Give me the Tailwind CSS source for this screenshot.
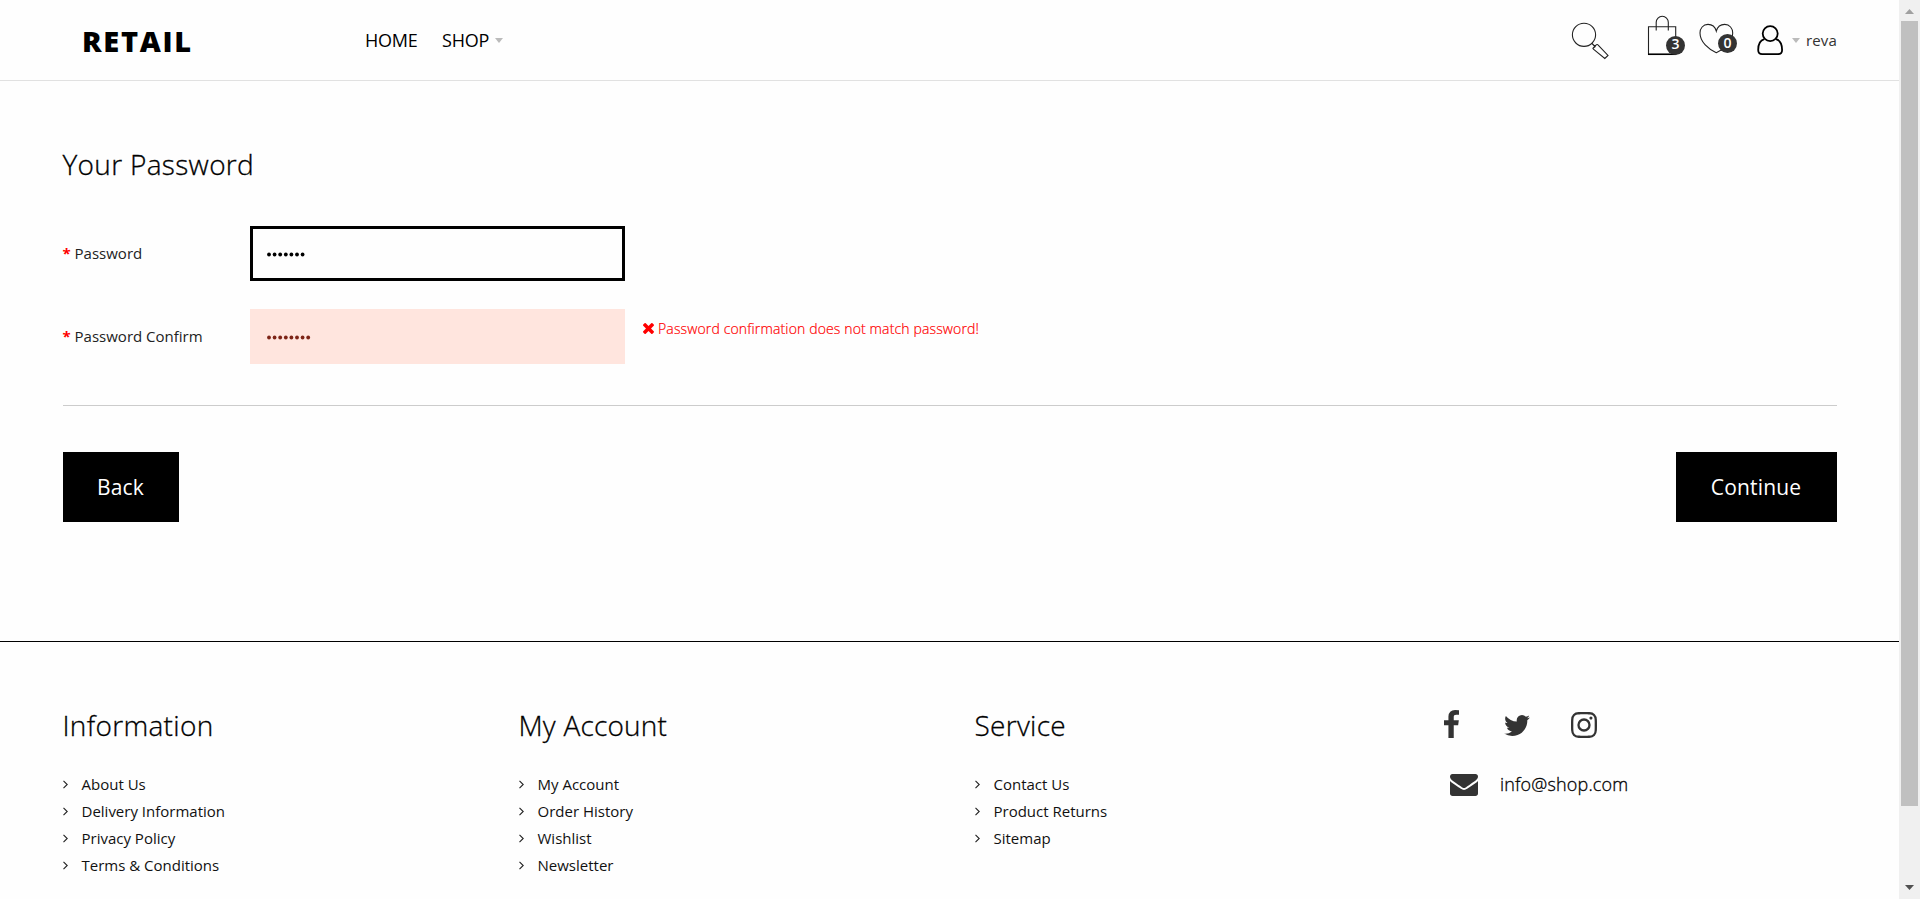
<!DOCTYPE html>
<html lang="en">
<head>
<meta charset="utf-8">
<title>Retail</title>
<script src="https://cdn.jsdelivr.net/npm/@tailwindcss/browser@4"></script>
</head>
<body class="flex h-[899px] w-[1920px] overflow-hidden bg-[#fefefe] font-['Open_Sans',sans-serif] text-black">
<svg class="hidden">
  <symbol id="chev" viewBox="0 0 5 9"><path d="M.5 .8 4.2 4.5 .5 8.2" fill="none" stroke="#222" stroke-width="1.1"/></symbol>
</svg>
<div class="w-[1899px] shrink-0">
  <header class="flex h-[81px] items-center border-b border-[#e1e1e1] pr-[62px] pl-[82px]">
    <div class="w-[283px] pt-px text-[29px] leading-none font-extrabold tracking-[1.700px]">RETAIL</div>
    <nav class="flex items-center text-[18px] font-medium tracking-[-0.200px]">
      <a class="w-[77px]">HOME</a><a>SHOP</a>
      <svg class="ml-[6px] h-[5px] w-[8px]" viewBox="0 0 8 5"><path d="M0 0h8L4 5z" fill="#bbb"/></svg>
    </nav>
    <div class="ml-auto flex h-20 items-start">
      <svg class="mt-[22px] mr-[38px] h-[38px] w-[38px]" viewBox="0 0 38 38" fill="none" stroke="#222" stroke-width="1.1"><circle cx="13" cy="12.800" r="11.600"/><path d="M21 21.500l3.500 3.500M22.300 26l3.200-3.300a.8.8 0 0 1 1.200 0L37 33.400 33.800 36.500 22.400 27.200a.8.8 0 0 1 0-1.200z"/></svg>
      <div class="relative mt-[15px] mr-[14px] h-[40px] w-[38px]">
        <svg class="h-[41px] w-[30px]" viewBox="0 0 30 41" fill="none" stroke="#222" stroke-width="1.100"><path d="M1.500 11.700h27.200v27.600H1.500z"/><path d="M9.200 15.500V7.300a6 6 0 0 1 12.100 0v8.200"/><path d="M1 39.300h28.200" stroke="#000" stroke-width="1.500"/></svg>
        <span class="absolute top-[20.500px] left-[19px] flex h-[19px] w-[19px] items-center justify-center rounded-full bg-[#333] pb-[2px] text-[14px] leading-none font-semibold text-white">3</span>
      </div>
      <div class="relative mt-[23px] mr-[20px] h-[32px] w-[38px]">
        <svg class="h-[31px] w-[35px]" viewBox="0 0 35 31" fill="none" stroke="#222" stroke-width="1.100"><path d="M17.300 8.200C16 3.500 12.500 1.400 9 1.400 4 1.400 1 5.500 1 10c0 9 8.500 16.200 16.300 19.700C25 26.200 33.700 19 33.700 10c0-4.500-3-8.600-8-8.600-3.600 0-7.100 2.100-8.400 6.800z"/></svg>
        <span class="absolute top-[11px] left-[19px] flex h-[19px] w-[19px] items-center justify-center rounded-full bg-[#333] pb-[2px] text-[14px] leading-none font-semibold text-white">0</span>
      </div>
      <svg class="mt-[25px] mr-[8px] h-[31px] w-[27px]" viewBox="0 0 27 31" fill="none" stroke="#000" stroke-width="1.800"><circle cx="13.200" cy="8.600" r="7.500"/><path d="M7.300 14.200C2.500 15.500 1.200 20 1.200 25c0 2.700 1.600 4.200 4 4.200h15.900c2.400 0 4-1.500 4-4.200 0-5-1.300-9.500-6.100-10.800"/></svg>
      <svg class="mt-[38px] mr-[6px] h-[5px] w-[8px]" viewBox="0 0 8 5"><path d="M0 0h8L4 5z" fill="#bbb"/></svg>
      <span class="mt-[30px] text-[15px] leading-[21px] tracking-[0.150px] text-[#333]">reva</span>
    </div>
  </header>
  <main class="h-[560px] px-[62.5px] pt-[63px]">
    <h1 class="text-[28px] leading-[40px] font-light tracking-[0.320px] [-webkit-text-stroke:0.3px_black]">Your Password</h1>
    <div class="mt-[42px] flex h-[55px] items-center">
      <label class="w-[187.500px] text-[15px] text-[#222]"><b class="font-bold text-[#f00]">*</b> Password</label>
      <div class="flex h-[55px] w-[375px] items-center border-3 border-black pt-px pl-[14px] text-[15px]"><svg class="h-[5px] w-[42px]" viewBox="0 0 42 5"><g><circle cx="2" cy="2.500" r="1.900"/><circle cx="7.600" cy="2.500" r="1.900"/><circle cx="13.200" cy="2.500" r="1.900"/><circle cx="18.800" cy="2.500" r="1.900"/><circle cx="24.400" cy="2.500" r="1.900"/><circle cx="30" cy="2.500" r="1.900"/><circle cx="35.600" cy="2.500" r="1.900"/></g></svg></div>
    </div>
    <div class="mt-[28px] flex h-[55px] items-center">
      <label class="w-[187.500px] text-[15px] text-[#222]"><b class="font-bold text-[#f00]">*</b> Password Confirm</label>
      <div class="flex h-[55px] w-[375px] items-center bg-[#ffe5de] pt-px pl-[17px]"><svg class="h-[5px] w-[46px]" viewBox="0 0 46 5" fill="#7d2416"><circle cx="2" cy="2.500" r="1.900"/><circle cx="7.600" cy="2.500" r="1.900"/><circle cx="13.200" cy="2.500" r="1.900"/><circle cx="18.800" cy="2.500" r="1.900"/><circle cx="24.400" cy="2.500" r="1.900"/><circle cx="30" cy="2.500" r="1.900"/><circle cx="35.600" cy="2.500" r="1.900"/><circle cx="41.200" cy="2.500" r="1.900"/></svg></div>
      <div class="mb-[16px] ml-[18px] flex items-center text-[14px] font-light tracking-[0.140px] text-[#f00] [-webkit-text-stroke:0.2px_#f00]">
        <svg class="mr-[4px] h-[11px] w-[11px]" viewBox="302 430 1188 1188" fill="#f00"><path transform="translate(0,64)" d="M1490 1322q0 40-28 68l-136 136q-28 28-68 28t-68-28l-294-294-294 294q-28 28-68 28t-68-28l-136-136q-28-28-28-68t28-68l294-294-294-294q-28-28-28-68t28-68l136-136q28-28 68-28t68 28l294 294 294-294q28-28 68-28t68 28l136 136q28 28 28 68t-28 68l-294 294 294 294q28 28 28 68z"/></svg>
        Password confirmation does not match password!
      </div>
    </div>
    <hr class="mt-[41px] border-[#ccc]">
    <div class="mt-[46px] flex justify-between text-[21px] text-white">
      <div class="flex h-[70px] w-[116px] items-center justify-center bg-black pt-[2px] tracking-[0.150px]">Back</div>
      <div class="flex h-[70px] w-[161px] items-center justify-center bg-black pt-[2px] tracking-[0.150px]">Continue</div>
    </div>
  </main>
  <footer class="flex h-[258px] border-t border-black pt-[63px] pl-[62.5px] text-[15px] text-[#111]">
    <section class="w-[456px]">
      <h2 class="mb-[26px] text-[28px] leading-[40px] font-light tracking-[0.320px] text-black [-webkit-text-stroke:0.3px_black]">Information</h2>
      <ul class="leading-[27px]">
        <li class="flex items-center gap-[14px]"><svg class="h-[9px] w-[5px]"><use href="#chev"/></svg>About Us</li>
        <li class="flex items-center gap-[14px]"><svg class="h-[9px] w-[5px]"><use href="#chev"/></svg>Delivery Information</li>
        <li class="flex items-center gap-[14px]"><svg class="h-[9px] w-[5px]"><use href="#chev"/></svg>Privacy Policy</li>
        <li class="flex items-center gap-[14px]"><svg class="h-[9px] w-[5px]"><use href="#chev"/></svg>Terms &amp; Conditions</li>
      </ul>
    </section>
    <section class="w-[456px]">
      <h2 class="mb-[26px] text-[28px] leading-[40px] font-light tracking-[0.200px] text-black [-webkit-text-stroke:0.3px_black]">My Account</h2>
      <ul class="leading-[27px]">
        <li class="flex items-center gap-[14px]"><svg class="h-[9px] w-[5px]"><use href="#chev"/></svg>My Account</li>
        <li class="flex items-center gap-[14px]"><svg class="h-[9px] w-[5px]"><use href="#chev"/></svg>Order History</li>
        <li class="flex items-center gap-[14px]"><svg class="h-[9px] w-[5px]"><use href="#chev"/></svg>Wishlist</li>
        <li class="flex items-center gap-[14px]"><svg class="h-[9px] w-[5px]"><use href="#chev"/></svg>Newsletter</li>
      </ul>
    </section>
    <section class="w-[469.500px]">
      <h2 class="mb-[26px] text-[28px] leading-[40px] font-light tracking-[0.300px] text-black [-webkit-text-stroke:0.3px_black]">Service</h2>
      <ul class="leading-[27px]">
        <li class="flex items-center gap-[14px]"><svg class="h-[9px] w-[5px]"><use href="#chev"/></svg>Contact Us</li>
        <li class="flex items-center gap-[14px]"><svg class="h-[9px] w-[5px]"><use href="#chev"/></svg>Product Returns</li>
        <li class="flex items-center gap-[14px]"><svg class="h-[9px] w-[5px]"><use href="#chev"/></svg>Sitemap</li>
      </ul>
    </section>
    <section class="pt-[5px]">
      <div class="flex h-[28px] items-end">
        <svg class="mr-[45px] h-[28px] w-[15px]" viewBox="479 0 864 1664" preserveAspectRatio="none" fill="#333"><path d="M1343 12v264h-157q-86 0-116 36t-30 108v189h293l-39 296h-254v759h-306v-759h-255v-296h255v-218q0-186 104-288.500t277-102.500q147 0 228 12z"/></svg>
        <svg class="mr-[41px] mb-[2px] h-[21px] w-[26px]" viewBox="108 256 1576 1280" fill="#333"><path d="M1684 408q-67 98-162 167 1 14 1 42 0 130-38 259.500t-115.500 248.500-184.500 210.500-258 146-323 54.500q-271 0-496-145 35 4 78 4 225 0 401-138-105-2-188-64.500t-114-159.500q33 5 61 5 43 0 85-11-112-23-185.500-111.500t-73.500-205.500v-4q68 38 146 41-66-44-105-115t-39-154q0-88 44-163 121 149 294.500 238.500t371.500 99.500q-8-38-8-74 0-134 94.500-228.500t228.500-94.500q140 0 236 102 109-21 205-78-37 115-142 178 93-10 186-50z"/></svg>
        <svg class="h-[26px] w-[26px]" viewBox="128 128 1536 1536" fill="#333"><path d="M1152 896q0-106-75-181t-181-75-181 75-75 181 75 181 181 75 181-75 75-181zm138 0q0 164-115 279t-279 115-279-115-115-279 115-279 279-115 279 115 115 279zm108-410q0 38-27 65t-65 27-65-27-27-65 27-65 65-27 65 27 27 65zm-502-220q-7 0-76.500-.5t-105.500 0-96.500 3-103 10-71.500 18.500q-50 20-88 58t-58 88q-11 29-18.500 71.500t-10 103-3 96.500 0 105.500.5 76.500-.5 76.500 0 105.500 3 96.500 10 103 18.500 71.500q20 50 58 88t88 58q29 11 71.500 18.500t103 10 96.500 3 105.500 0 76.500-.5 76.500.5 105.500 0 96.500-3 103-10 71.500-18.500q50-20 88-58t58-88q11-29 18.500-71.500t10-103 3-96.500 0-105.500-.5-76.500.5-76.500 0-105.500-3-96.500-10-103-18.500-71.500q-20-50-58-88t-88-58q-29-11-71.500-18.500t-103-10-96.500-3-105.500 0-76.500.5zm768 630q0 229-5 317-10 208-124 322t-322 124q-88 5-317 5t-317-5q-208-10-322-124t-124-322q-5-88-5-317t5-317q10-208 124-322t322-124q88-5 317-5t317 5q208 10 322 124t124 322q5 88 5 317z"/></svg>
      </div>
      <div class="mt-[35px] ml-[6px] flex items-center gap-[22px] text-[18px] leading-[26px] font-light tracking-[0.170px] text-black">
        <svg class="h-[22px] w-[28px]" viewBox="0 256 1792 1408" fill="#333"><path d="M1792 710v794q0 66-47 113t-113 47h-1472q-66 0-113-47t-47-113v-794q44 49 101 87 362 246 497 345 57 42 92.500 65.500t94.500 48 110 24.500h2q51 0 110-24.500t94.500-48 92.500-65.500q170-123 498-345 57-39 100-87zm0-294q0 79-49 151t-122 123q-376 261-468 325-10 7-42.500 31t-54 38.500-52 32.500-57.500 27-50 9h-2q-23 0-50-9t-57.500-27-52-32.500-54-38.500-42.500-31q-91-64-262-182.500t-205-142.500q-62-42-117-115.500t-55-136.500q0-78 41.500-130t118.500-52h1472q65 0 112.500 47t47.500 113z"/></svg>
        <span class="-mt-[2px] [-webkit-text-stroke:0.3px_black]">info@shop.com</span>
      </div>
    </section>
  </footer>
</div>
<div class="flex w-[21px] shrink-0 flex-col items-center bg-[#f0f0f0]">
  <svg class="mt-[9px] h-[5px] w-[9px]" viewBox="0 0 9 5"><path d="M4.500 0 9 5H0z" fill="#a0a0a0"/></svg>
  <div class="mt-[7px] h-[785px] w-[17px] bg-[#c0c0c0]"></div>
  <svg class="mt-[79px] h-[5px] w-[9px]" viewBox="0 0 9 5"><path d="M0 0h9L4.500 5z" fill="#505050"/></svg>
</div>
</body>
</html>
